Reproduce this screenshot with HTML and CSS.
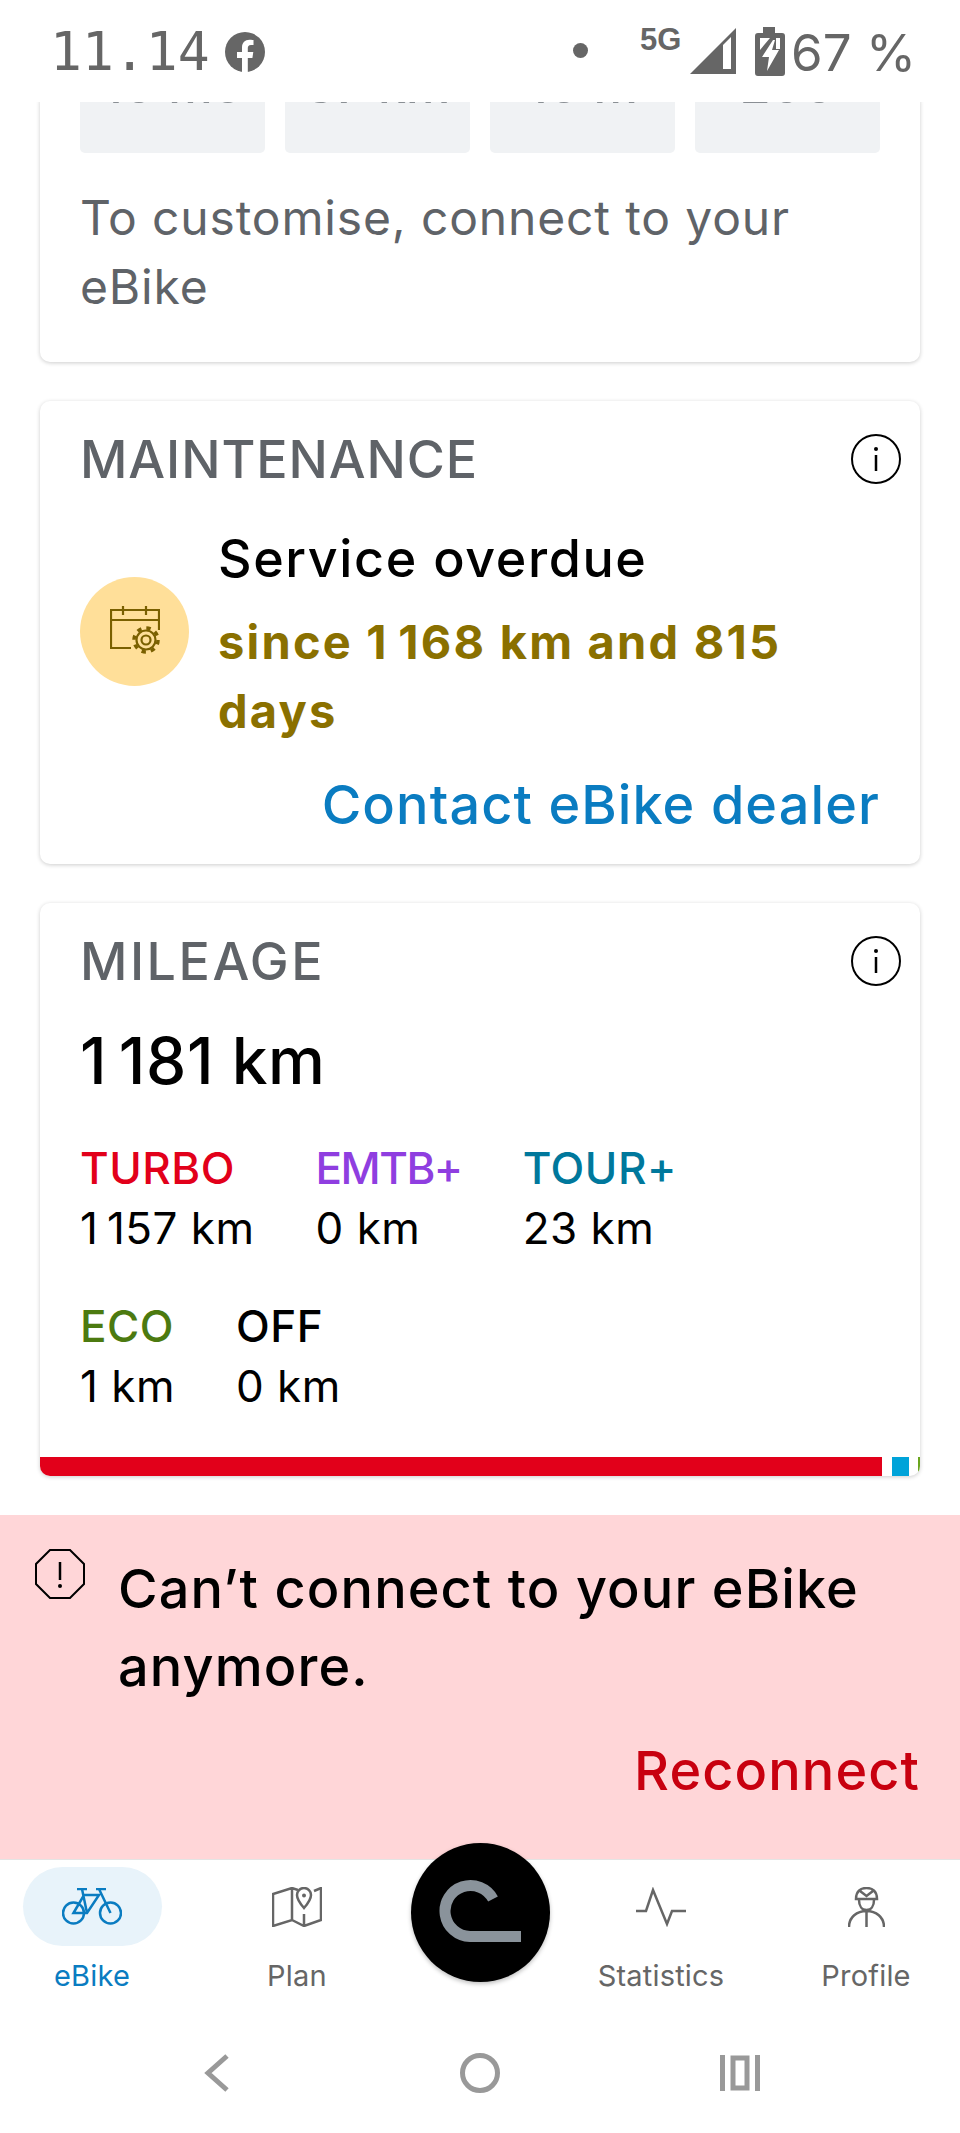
FILE: index.html
```html
<!DOCTYPE html>
<html lang="en">
<head>
    <meta charset="UTF-8">
    <meta name="viewport" content="width=device-width, initial-scale=1.0">
    <title>eBike</title>
    <link rel="stylesheet" href="styles.css">
</head>
<body>
    <div class="status-bar">
        <div class="status-left">
            <span class="clock">11.14</span>
            <svg class="fb-icon" viewBox="0 0 40 40"><circle cx="20" cy="20" r="20" fill="#666"/><path d="M17 40V26h-5v-6h5v-4.500c0-5 3-7.800 7.500-7.800 2.200 0 4 .3 4 .3v5h-2.500c-2.500 0-3.200 1.500-3.200 3.100V20h5.500l-.9 6h-4.600v14z" fill="#fff"/></svg>
        </div>
        <div class="status-right">
            <span class="dot"></span>
            <span class="net">5G</span>
            <svg class="signal" viewBox="0 0 46 46"><path d="M0 46 46 0v46z" fill="#666"/><path d="M33 17l8-8v32h-8z" fill="#fff"/></svg>
            <svg class="battery" viewBox="0 0 30 49"><path d="M8 0h12v6h7a3 3 0 0 1 3 3v37a3 3 0 0 1-3 3H3a3 3 0 0 1-3-3V9a3 3 0 0 1 3-3h5z" fill="#666"/><path d="M5 11h10L5 23zM21 11h4v11h-4z" fill="#fff"/><path d="M18 13 7 30h7l-2 14 12-21h-7l3-10z" fill="#fff"/></svg>
            <span class="percent">67 %</span>
        </div>
    </div>

    <div class="content">
        <section class="card card-custom">
            <div class="tiles">
                <div class="tile"><span>10 mo</span></div>
                <div class="tile"><span>37 km</span></div>
                <div class="tile"><span>10 m</span></div>
                <div class="tile"><span>200</span></div>
            </div>
            <p class="hint">To customise, connect to your eBike</p>
        </section>

        <section class="card card-service">
            <div class="card-head">
                <h2>MAINTENANCE</h2>
                <svg class="info" viewBox="0 0 50 50"><circle cx="25" cy="25" r="24" fill="none" stroke="#000" stroke-width="2"/><circle cx="25" cy="15" r="2" fill="#000"/><path d="M25 21v16" stroke="#000" stroke-width="2.500"/></svg>
            </div>
            <div class="service-row">
                <div class="service-icon">
                    <svg viewBox="0 0 50 50" width="50" height="50" fill="none" stroke="#7a6000" stroke-width="2.200">
                        <path d="M21 42H1V4h48v20M1 14h48M13 0v9M36 0v9"/>
                        <circle cx="36" cy="34" r="12" stroke="none" fill="#ffdf99"/>
                        <circle cx="36" cy="34" r="12" stroke-width="3.500" stroke-dasharray="4.400 5.020"/>
                        <circle cx="36" cy="34" r="9.500" fill="#ffdf99"/>
                        <circle cx="36" cy="34" r="4.500"/>
                    </svg>
                </div>
                <div class="service-text">
                    <div class="service-title">Service overdue</div>
                    <div class="service-sub">since 1&#8201;168 km and 815 days</div>
                </div>
            </div>
            <a class="action dealer" href="#">Contact eBike dealer</a>
        </section>

        <section class="card card-mileage">
            <div class="card-head">
                <h2 class="wide">MILEAGE</h2>
                <svg class="info" viewBox="0 0 50 50"><circle cx="25" cy="25" r="24" fill="none" stroke="#000" stroke-width="2"/><circle cx="25" cy="15" r="2" fill="#000"/><path d="M25 21v16" stroke="#000" stroke-width="2.500"/></svg>
            </div>
            <div class="total">1&#8201;181 km</div>
            <div class="modes">
                <div class="mode"><div class="mode-name turbo">TURBO</div><div>1&#8201;157 km</div></div>
                <div class="mode"><div class="mode-name emtb">EMTB+</div><div>0 km</div></div>
                <div class="mode"><div class="mode-name tour">TOUR+</div><div>23 km</div></div>
            </div>
            <div class="modes">
                <div class="mode"><div class="mode-name eco">ECO</div><div>1 km</div></div>
                <div class="mode"><div class="mode-name">OFF</div><div>0 km</div></div>
            </div>
            <div class="mileage-bar">
                <span class="seg-red"></span>
                <span class="seg-blue"></span>
                <span class="seg-green"></span>
            </div>
        </section>
    </div>

    <div class="banner">
        <div class="banner-row">
            <svg class="warn" viewBox="0 0 50 50" fill="none" stroke="#000" stroke-width="2"><path d="M15 1h20l14 14v20L35 49H15L1 35V15z"/><path d="M25 13v18" stroke-width="2.500"/><circle cx="25" cy="37" r="2" fill="#000" stroke="none"/></svg>
            <p>Can’t connect to your eBike anymore.</p>
        </div>
        <a class="action reconnect" href="#">Reconnect</a>
    </div>

    <nav class="tabbar">
        <a class="tab active" href="#">
            <span class="tab-icon">
                <svg viewBox="0 0 60 37" width="60" height="37" fill="none" stroke="#0a7cc1" stroke-width="2.500"><circle cx="11.500" cy="25" r="10.500"/><circle cx="48.500" cy="25" r="10.500"/><path d="M11.500 25 22 7h15L25 25zM20 1l5 24M37 1l11.500 24M15 1h10M34 1h10"/></svg>
            </span>
            <span class="tab-label">eBike</span>
        </a>
        <a class="tab" href="#">
            <span class="tab-icon">
                <svg viewBox="0 0 50 40" width="50" height="40" fill="none" stroke="#666" stroke-width="2.500"><path d="M42 4l7-3v32l-17 6-12-6-19 6V7l19-6 6 2M20 1v32M32 27v12"/><path d="M32 21s-7-8-7-13a7 7 0 0 1 14 0c0 5-7 13-7 13z"/><circle cx="32" cy="8.500" r="2" fill="#666" stroke="none"/></svg>
            </span>
            <span class="tab-label">Plan</span>
        </a>
        <div class="tab tab-spacer"></div>
        <a class="tab" href="#">
            <span class="tab-icon">
                <svg viewBox="0 0 50 40" width="50" height="40" fill="none" stroke="#666" stroke-width="2.500"><path d="M0 24h10l7-21 14 34 5-13h14"/></svg>
            </span>
            <span class="tab-label">Statistics</span>
        </a>
        <a class="tab" href="#">
            <span class="tab-icon">
                <svg viewBox="0 0 37 40" width="37" height="40" fill="none" stroke="#666" stroke-width="2.500"><path d="M8 12C8 4 13 1 18.500 1S29 4 29 12zM12 4l6.500 5L25 4M11 13c0 6 3 10 7.500 10S26 19 26 13M1 40c0-10 8-16 17.500-16S36 30 36 40M18.500 24v16"/></svg>
            </span>
            <span class="tab-label">Profile</span>
        </a>
    </nav>

    <button class="ride-btn">
        <svg viewBox="0 0 139 139" width="139" height="139" fill="none" stroke="#8a939b" stroke-width="11"><path d="M82 56A25.500 25.500 0 1 0 59 93.500h51"/></svg>
    </button>

    <div class="nav-bar">
        <svg class="nav-back" viewBox="0 0 26 38" fill="none" stroke="#999" stroke-width="5"><path d="M23 2 4 19l19 17"/></svg>
        <span class="nav-home"></span>
        <svg class="nav-recent" viewBox="0 0 40 36" fill="none" stroke="#999" stroke-width="5"><path d="M2.500 0v36M37.500 0v36"/><path d="M13 3h14v30H13z"/></svg>
    </div>
</body>
</html>
```

FILE: styles.css
```css
body {
    position: relative;
    display: flex;
    flex-direction: column;
    height: 2133px;
    margin: 0;
    overflow: hidden;
    font-family: Inter, "Noto Sans", sans-serif;
    background-color: #fff;
    color: #000;
}
a {
    text-decoration: none;
}

/* status bar */
.status-bar {
    flex: 0 0 102px;
    display: flex;
    justify-content: space-between;
    align-items: flex-start;
    box-sizing: border-box;
    padding: 0 44px 0 50px;
    color: #666;
}
.status-left {
    display: flex;
    align-items: center;
    gap: 15px;
    padding-top: 30px;
}
.clock {
    font-family: "DejaVu Sans Mono", monospace;
    font-size: 53px;
    line-height: 44px;
}
.fb-icon {
    width: 40px;
    height: 40px;
}
.status-right {
    display: flex;
    align-items: flex-start;
    padding-top: 27px;
}
.dot {
    width: 15px;
    height: 15px;
    margin: 16px 52px 0 0;
    border-radius: 50%;
    background-color: #666;
}
.net {
    width: 50px;
    font-family: "Liberation Sans", sans-serif;
    font-weight: 700;
    font-size: 31px;
    line-height: 26px;
}
.signal {
    width: 46px;
    height: 46px;
    margin: 1px 19px 0 0;
}
.battery {
    width: 30px;
    height: 49px;
    margin-right: 6px;
}
.percent {
    font-size: 51px;
    line-height: 46px;
    padding-top: 3px;
}

/* scrolled content */
.content {
    flex: 0 0 1413px;
    overflow: hidden;
    padding: 0 40px;
}
.card {
    position: relative;
    overflow: hidden;
    height: 463px;
    box-sizing: border-box;
    margin-bottom: 39px;
    padding: 0 40px;
    border-radius: 10px;
    background-color: #fff;
    box-shadow: 0 1px 4px rgba(0, 0, 0, 0.2);
}
.card-custom {
    height: 270px;
    margin-top: -10px;
    padding-top: 10px;
}
.tiles {
    display: flex;
    justify-content: space-between;
}
.tile {
    width: 185px;
    height: 51px;
    overflow: hidden;
    border-radius: 0 0 5px 5px;
    background-color: #f0f2f4;
    color: #8a8f94;
    text-align: center;
    font-size: 50px;
    font-weight: 500;
    line-height: 6px;
}
.tile span {
    display: block;
    margin-top: -20px;
}
.hint {
    margin: 30px 0 0;
    width: 760px;
    font-size: 48px;
    letter-spacing: 0.85px;
    line-height: 69px;
    color: #5f6368;
}
.card-mileage {
    height: 573px;
}
.card-head {
    display: flex;
    justify-content: space-between;
    align-items: center;
    height: 116px;
    margin-right: -21px;
}
.card-head h2 {
    margin: 0;
    font-size: 52px;
    font-weight: 550;
    letter-spacing: 0.9px;
    color: #5f6368;
}
.card-head h2.wide {
    letter-spacing: 2.5px;
}
.info {
    width: 50px;
    height: 50px;
}

/* maintenance */
.service-row {
    display: flex;
    align-items: center;
    gap: 29px;
    margin-top: 6px;
}
.service-icon {
    flex: 0 0 109px;
    height: 109px;
    margin-bottom: 6px;
    display: flex;
    align-items: center;
    justify-content: center;
    border-radius: 50%;
    background-color: #ffdf99;
}
.service-text {
    flex: 1;
}
.service-title {
    margin-bottom: 12px;
    font-size: 52px;
    font-weight: 550;
    letter-spacing: 1.6px;
    line-height: 72px;
}
.service-sub {
    max-width: 600px;
    font-size: 47px;
    font-weight: 700;
    letter-spacing: 2.2px;
    line-height: 69px;
    color: #8a7000;
}
.action {
    display: block;
    text-align: right;
    font-size: 54px;
    font-weight: 550;
    letter-spacing: 1.1px;
    line-height: 70px;
}
.dealer {
    margin-top: 25px;
    color: #0a7cc1;
}

/* mileage */
.total {
    margin-top: 7px;
    font-size: 64px;
    font-weight: 550;
    letter-spacing: 0.6px;
    line-height: 70px;
}
.modes {
    display: flex;
    gap: 61px;
    margin-top: 42px;
    font-size: 44px;
    letter-spacing: 0.5px;
    line-height: 60px;
}
.modes + .modes {
    margin-top: 38px;
}
.mode-name {
    font-weight: 550;
}
.turbo {
    color: #e2001a;
}
.emtb {
    letter-spacing: -1.5px;
    color: #8f3ee0;
}
.tour {
    color: #00789c;
}
.eco {
    color: #4c7a10;
}
.mileage-bar {
    position: absolute;
    left: 0;
    right: 0;
    bottom: 0;
    display: flex;
    height: 19px;
}
.seg-red {
    width: 842px;
    background-color: #e2001a;
}
.seg-blue {
    width: 17px;
    margin-left: 10px;
    background-color: #00a3d9;
}
.seg-green {
    width: 2px;
    margin-left: 9px;
    background-color: #6aa51e;
}

/* warning banner */
.banner {
    flex: 0 0 344px;
    box-sizing: border-box;
    padding: 34px 40px 0 35px;
    background-color: #ffd6d8;
}
.banner-row {
    display: flex;
    align-items: flex-start;
    gap: 33px;
}
.warn {
    flex: 0 0 50px;
    height: 50px;
}
.banner-row p {
    margin: 1px 0 0;
    font-size: 54px;
    font-weight: 550;
    letter-spacing: 1.1px;
    line-height: 78px;
}
.reconnect {
    margin-top: 30px;
    color: #c8000f;
}

/* bottom tabs */
.tabbar {
    flex: 0 0 152px;
    display: grid;
    grid-template-columns: 184px 226px 140px 222px 188px;
    box-sizing: border-box;
    padding-top: 7px;
    border-top: 1px solid #e4e4e4;
}
.tab {
    display: flex;
    flex-direction: column;
    align-items: center;
    color: #666;
}
.tab-icon {
    display: flex;
    align-items: center;
    justify-content: center;
    width: 139px;
    height: 79px;
    border-radius: 40px;
}
.tab-label {
    margin-top: 12px;
    font-size: 29px;
    letter-spacing: 0.2px;
    line-height: 36px;
}
.tab.active {
    color: #0a7cc1;
}
.tab.active .tab-icon {
    background-color: #e8f3fa;
}
.ride-btn {
    position: absolute;
    left: 411px;
    top: 1843px;
    width: 139px;
    height: 139px;
    padding: 0;
    border: 0;
    border-radius: 50%;
    background-color: #000;
    box-shadow: 0 2px 4px rgba(0, 0, 0, 0.25);
}

/* android nav */
.nav-bar {
    flex: 1;
    display: flex;
    align-items: center;
    padding: 2px 0 0 204px;
}
.nav-back {
    width: 26px;
    height: 38px;
}
.nav-home {
    width: 30px;
    height: 30px;
    margin: 0 220px 0 230px;
    border: 5px solid #999;
    border-radius: 50%;
}
.nav-recent {
    width: 40px;
    height: 36px;
}
```
